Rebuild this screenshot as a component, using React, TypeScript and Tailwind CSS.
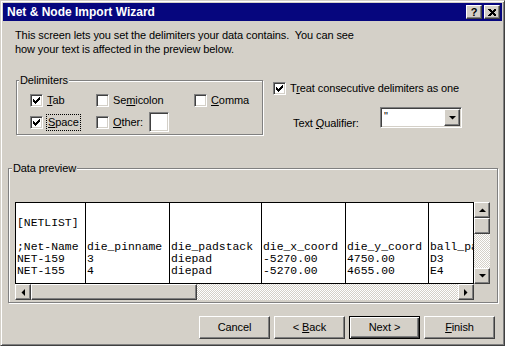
import React from "react";

const raised =
  "bg-[#d4d0c8] border border-t-white border-l-white border-r-[#404040] border-b-[#404040] shadow-[inset_-1px_-1px_0_#808080]";
const sunken =
  "border border-t-[#808080] border-l-[#808080] border-r-white border-b-white shadow-[inset_1px_1px_0_#404040,inset_-1px_-1px_0_#d4d0c8]";
const etched =
  "border border-[#808080] shadow-[inset_1px_1px_0_#fff,1px_1px_0_#fff]";

function CheckMark() {
  const px: [number, number][] = [
    [6, 0], [5, 1], [6, 1], [0, 2], [4, 2], [5, 2], [6, 2],
    [0, 3], [1, 3], [3, 3], [4, 3], [5, 3], [0, 4], [1, 4], [2, 4], [3, 4], [4, 4],
    [1, 5], [2, 5], [3, 5], [2, 6],
  ];
  return (
    <svg width="7" height="7" viewBox="0 0 7 7" shapeRendering="crispEdges">
      {px.map(([x, y]) => (
        <rect key={`${x}-${y}`} x={x} y={y} width="1" height="1" fill="#000" />
      ))}
    </svg>
  );
}

function Check({ checked, children, focus }: { checked?: boolean; children: React.ReactNode; focus?: boolean }) {
  return (
    <div className="flex items-center gap-[4px]">
      <span className={`w-[13px] h-[13px] bg-white flex items-center justify-center shrink-0 ${sunken}`}>
        {checked && <CheckMark />}
      </span>
      <span className={focus ? "border border-dotted border-black px-[1px] py-[1px] leading-[13px] -ml-[1px]" : "leading-[13px]"}>
        {children}
      </span>
    </div>
  );
}

function Arrow({ dir }: { dir: "up" | "down" | "left" | "right" }) {
  const pts = {
    up: "0,4 7,4 3.5,0.5",
    down: "0,0 7,0 3.5,3.5",
    left: "4,0 4,7 0.5,3.5",
    right: "0,0 0,7 3.5,3.5",
  }[dir];
  const w = dir === "up" || dir === "down" ? 7 : 4;
  const h = dir === "up" || dir === "down" ? 4 : 7;
  return (
    <svg width={w} height={h} viewBox={`0 0 ${w} ${h}`}>
      <polygon points={pts} fill="#000" />
    </svg>
  );
}

const columns = [
  { w: "w-[70px]", rows: ["", "[NETLIST]", "", ";Net-Name", "NET-159", "NET-155"] },
  { w: "w-[84px]", rows: ["", "", "", "die_pinname", "3", "4"] },
  { w: "w-[92px]", rows: ["", "", "", "die_padstack", "diepad", "diepad"] },
  { w: "w-[84px]", rows: ["", "", "", "die_x_coord", "-5270.00", "-5270.00"] },
  { w: "w-[83px]", rows: ["", "", "", "die_y_coord", "4750.00", "4655.00"] },
  { w: "flex-1", rows: ["", "", "", "ball_pa", "D3", "E4"] },
];

const track =
  "bg-[repeating-conic-gradient(#ffffff_0%_25%,#d4d0c8_0%_50%)] bg-[length:2px_2px]";

export default function App() {
  return (
    <div className="w-[508px] h-[348px] bg-white overflow-hidden font-['Liberation_Sans',Arial,sans-serif] text-[11px] tracking-[-0.1px] text-black">
      <div className="w-[505px] h-[346px] bg-[#d4d0c8] border border-t-[#d4d0c8] border-l-[#d4d0c8] border-r-[#404040] border-b-[#404040] shadow-[inset_1px_1px_0_#fff,inset_-1px_-1px_0_#808080] p-[2px] flex flex-col">
        {/* title bar */}
        <div className="h-[18px] bg-[#06067e] flex items-center pl-[4px] pr-[2px] shrink-0">
          <span className="text-white font-bold text-[12px] tracking-normal flex-1">Net &amp; Node Import Wizard</span>
          <div className="flex gap-[2px]">
            <span className={`w-[16px] h-[14px] flex items-center justify-center font-bold text-[11px] leading-none ${raised}`}>?</span>
            <span className={`w-[16px] h-[14px] flex items-center justify-center ${raised}`}>
              <svg width="8" height="7" viewBox="0 0 8 7" shapeRendering="crispEdges">
                <path d="M0 0h2l2 2 2-2h2v1L5.5 3.5 8 6v1H6L4 5 2 7H0V6l2.5-2.5L0 1z" fill="#000" />
              </svg>
            </span>
          </div>
        </div>

        <p className="mt-[7px] pl-[12px] leading-[14px]">
          This screen lets you set the delimiters your data contains.&nbsp; You can see
          <br />
          how your text is affected in the preview below.
        </p>

        {/* delimiters + options */}
        <div className="flex items-start">
          <div className={`relative ml-[13px] mt-[24px] w-[247px] h-[55px] ${etched} pt-[8px] pl-[13px]`}>
            <span className="absolute -top-[8px] left-[2px] bg-[#d4d0c8] px-[1px] leading-[14px]">Delimiters</span>
            <div className="grid grid-cols-[66px_98px_auto]">
              <div className="h-[22px] flex items-center"><Check checked><span className="underline">T</span>ab</Check></div>
              <div className="h-[22px] flex items-center"><Check>Se<span className="underline">m</span>icolon</Check></div>
              <div className="h-[22px] flex items-center"><Check><span className="underline">C</span>omma</Check></div>
              <div className="h-[22px] flex items-center"><Check checked focus><span className="underline">S</span>pace</Check></div>
              <div className="h-[22px] flex items-center gap-[6px]">
                <Check><span className="underline">O</span>ther:</Check>
                <span className={`w-[20px] h-[20px] bg-white ${sunken}`} />
              </div>
            </div>
          </div>

          <div className="ml-[10px] mt-[25px] flex flex-col">
            <div className="h-[15px] flex items-center">
              <Check checked>T<span className="underline">r</span>eat consecutive delimiters as one</Check>
            </div>
            <div className="mt-[11px] ml-[20px] flex items-start">
              <span className="w-[87px] pt-[10px] leading-[13px]">Text <span className="underline">Q</span>ualifier:</span>
              <div className={`w-[82px] h-[21px] bg-white flex items-start ${sunken} p-[1px]`}>
                <span className="flex-1 pl-[2px] pt-[1px] leading-[13px] text-black">"</span>
                <span className={`w-[16px] h-[17px] flex items-center justify-center ${raised}`}>
                  <Arrow dir="down" />
                </span>
              </div>
            </div>
          </div>
        </div>

        {/* data preview */}
        <div className={`relative ml-[5px] mt-[33px] w-[490px] h-[135px] ${etched} pt-[33px] pl-[6px]`}>
          <span className="absolute -top-[8px] left-[3px] bg-[#d4d0c8] px-[1px] leading-[14px]">Data preview</span>
          <div className="flex w-[476px]">
            <div className="w-[459px] h-[82px] bg-white border border-black flex font-['Liberation_Mono','Courier_New',monospace] text-[11.4px] tracking-normal overflow-hidden">
              {columns.map((c, i) => (
                <div key={i} className={`${c.w} shrink-0 ${i < columns.length - 1 ? "border-r border-black" : ""} pt-[2px] pl-[1px] overflow-hidden whitespace-nowrap`}>
                  {c.rows.map((r, j) => (
                    <div key={j} className="h-[12px] leading-[12px]">{r}</div>
                  ))}
                </div>
              ))}
            </div>
            <div className="w-[16px] h-[82px] flex flex-col">
              <span className={`h-[16px] flex items-center justify-center ${raised}`}><Arrow dir="up" /></span>
              <span className={`h-[16px] ${raised}`} />
              <span className={`flex-1 ${track}`} />
              <span className={`h-[16px] flex items-center justify-center ${raised}`}><Arrow dir="down" /></span>
            </div>
          </div>
          <div className="flex w-[476px] h-[16px]">
            <span className={`w-[16px] flex items-center justify-center ${raised}`}><Arrow dir="left" /></span>
            <span className={`w-[166px] ${raised}`} />
            <span className={`flex-1 ${track}`} />
            <span className={`w-[16px] flex items-center justify-center ${raised}`}><Arrow dir="right" /></span>
            <span className="w-[17px] bg-[#d4d0c8]" />
          </div>
        </div>

        {/* buttons */}
        <div className="mt-[13px] flex justify-end gap-[4px] pr-[7px]">
          <button className={`w-[71px] h-[23px] ${raised}`}>Cancel</button>
          <button className={`w-[71px] h-[23px] ${raised}`}>&lt; <span className="underline">B</span>ack</button>
          <button className="w-[71px] h-[23px] bg-[#d4d0c8] border border-black shadow-[inset_1px_1px_0_#fff,inset_-1px_-1px_0_#404040,inset_-2px_-2px_0_#808080]">Next &gt;</button>
          <button className={`w-[71px] h-[23px] ${raised}`}><span className="underline">F</span>inish</button>
        </div>
      </div>
    </div>
  );
}
